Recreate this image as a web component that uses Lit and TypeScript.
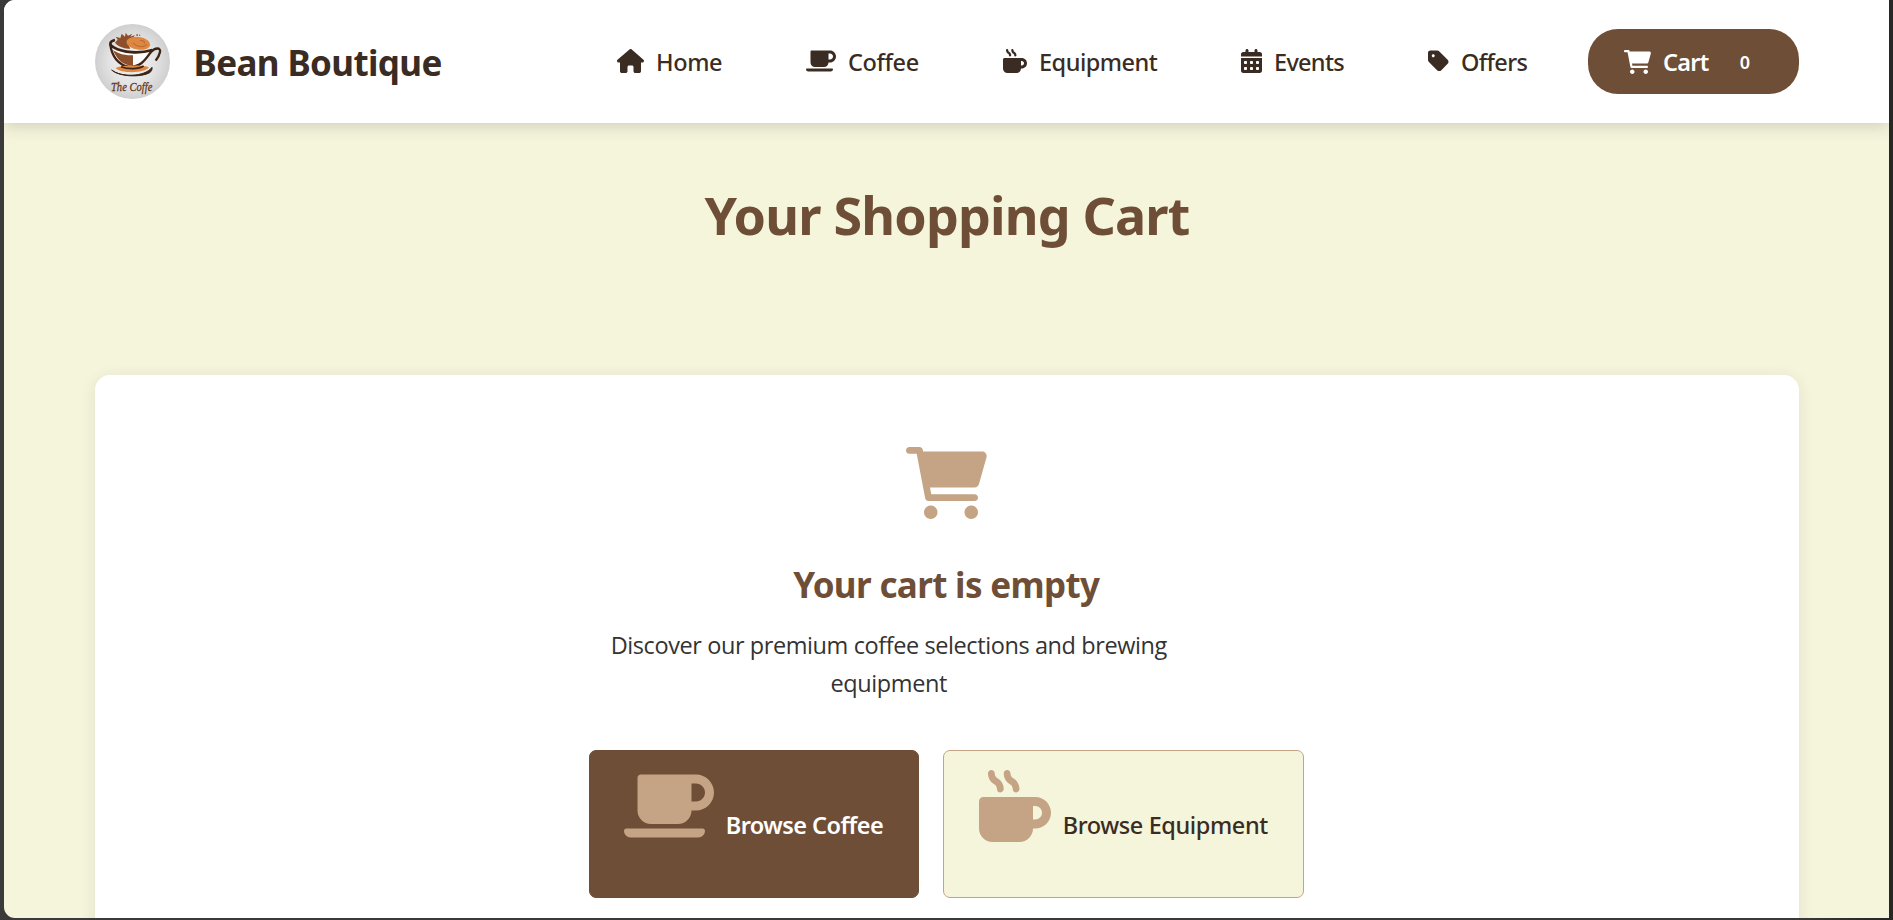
import { LitElement, html, css, svg } from "lit";
import { customElement, property } from "lit/decorators.js";

const ICONS: Record<string, { w: number; d: string }> = {
  home: { w: 576, d: "M575.8 255.5c0 18-15 32.1-32 32.1h-32l.7 160.2c0 2.7-.2 5.4-.5 8.1V472c0 22.1-17.9 40-40 40H456c-1.1 0-2.2 0-3.3-.1c-1.4 .1-2.8 .1-4.2 .1H416 392c-22.1 0-40-17.9-40-40V448 384c0-17.7-14.3-32-32-32H256c-17.7 0-32 14.3-32 32v64 24c0 22.1-17.9 40-40 40H160 128.1c-1.5 0-3-.1-4.5-.2c-1.2 .1-2.4 .2-3.6 .2H104c-22.1 0-40-17.9-40-40V360c0-.9 0-1.9 .1-2.8V287.6H32c-18 0-32-14-32-32.1c0-9 3-17 10-24L266.4 8c7-7 15-8 22-8s15 2 21 7L564.8 231.5c8 7 12 15 11 24z" },
  coffee: { w: 640, d: "M512 32H120c-13.25 0-24 10.75-24 24L96.01 288c0 53 43 96 96 96h192C437 384 480 341 480 288h32c70.63 0 128-57.38 128-128S582.6 32 512 32zM512 224h-32V96h32c35.25 0 64 28.75 64 64S547.3 224 512 224zM560 416h-544C7.164 416 0 423.2 0 432C0 458.5 21.49 480 48 480h480c26.51 0 48-21.49 48-48C576 423.2 568.8 416 560 416z" },
  mug: { w: 512, d: "M400 192H32C14.25 192 0 206.3 0 224v192c0 53 43 96 96 96h192c53 0 96-43 96-96h16c61.75 0 112-50.25 112-112S461.8 192 400 192zM400 352H384V256h16C426.5 256 448 277.5 448 304S426.5 352 400 352zM107.9 100.7C120.3 107.1 128 121.4 128 136c0 13.25 10.75 23.89 24 23.89S176 148.1 176 135.7c0-31.34-16.83-60.64-43.91-76.45C119.7 52.03 112 38.63 112 24.28c0-13.25-10.75-24.14-24-24.14S64 11.03 64 24.28C64 55.63 80.83 84.92 107.9 100.7zM219.9 100.7C232.3 107.1 240 121.4 240 136c0 13.25 10.75 23.86 24 23.86S288 148.1 288 135.7c0-31.34-16.83-60.64-43.91-76.45C231.7 52.03 224 38.63 224 24.28c0-13.25-10.75-24.18-24-24.18S176 11.03 176 24.28C176 55.63 192.8 84.92 219.9 100.7z" },
  calendar: { w: 448, d: "M160 32V64H288V32C288 14.33 302.3 0 320 0C337.7 0 352 14.33 352 32V64H400C426.5 64 448 85.49 448 112V160H0V112C0 85.49 21.49 64 48 64H96V32C96 14.33 110.3 0 128 0C145.7 0 160 14.33 160 32zM0 192H448V464C448 490.5 426.5 512 400 512H48C21.49 512 0 490.5 0 464V192zM64 304C64 312.8 71.16 320 80 320H112C120.8 320 128 312.8 128 304V272C128 263.2 120.8 256 112 256H80C71.16 256 64 263.2 64 272V304zM192 304C192 312.8 199.2 320 208 320H240C248.8 320 256 312.8 256 304V272C256 263.2 248.8 256 240 256H208C199.2 256 192 263.2 192 272V304zM336 256C327.2 256 320 263.2 320 272V304C320 312.8 327.2 320 336 320H368C376.8 320 384 312.8 384 304V272C384 263.2 376.8 256 368 256H336zM64 432C64 440.8 71.16 448 80 448H112C120.8 448 128 440.8 128 432V400C128 391.2 120.8 384 112 384H80C71.16 384 64 391.2 64 400V432zM208 384C199.2 384 192 391.2 192 400V432C192 440.8 199.2 448 208 448H240C248.8 448 256 440.8 256 432V400C256 391.2 248.8 384 240 384H208zM320 432C320 440.8 327.2 448 336 448H368C376.8 448 384 440.8 384 432V400C384 391.2 376.8 384 368 384H336C327.2 384 320 391.2 320 400V432z" },
  tag: { w: 448, d: "M48 32H197.5C214.5 32 230.7 38.74 242.7 50.75L418.7 226.7C443.7 251.7 443.7 292.3 418.7 317.3L285.3 450.7C260.3 475.7 219.7 475.7 194.7 450.7L18.75 274.7C6.743 262.7 0 246.5 0 229.5V80C0 53.49 21.49 32 48 32zM112 176C129.7 176 144 161.7 144 144C144 126.3 129.7 112 112 112C94.33 112 80 126.3 80 144C80 161.7 94.33 176 112 176z" },
  cart: { w: 576, d: "M96 0C107.5 0 117.4 8.19 119.6 19.51L121.1 32H541.8C562.1 32 578.3 52.25 572.6 72.66L518.6 264.7C514.7 278.5 502.1 288 487.8 288H170.7L179.9 336H488C501.3 336 512 346.7 512 360C512 373.3 501.3 384 488 384H159.1C148.5 384 138.6 375.8 136.4 364.5L76.14 48H24C10.75 48 0 37.25 0 24C0 10.75 10.75 0 24 0H96zM128 464C128 437.5 149.5 416 176 416C202.5 416 224 437.5 224 464C224 490.5 202.5 512 176 512C149.5 512 128 490.5 128 464zM512 464C512 490.5 490.5 512 464 512C437.5 512 416 490.5 416 464C416 437.5 437.5 416 464 416C490.5 416 512 437.5 512 464z" },
};

@customElement("app-icon")
class AppIcon extends LitElement {
  @property() name = "home";
  static styles = css`
    :host { display: block; flex: none; height: 24px; }
    svg { display: block; height: 100%; width: auto; fill: currentColor; }
  `;
  render() {
    const { w, d } = ICONS[this.name];
    return html`<svg viewBox="0 0 ${w} 512">${svg`<path d=${d} />`}</svg>`;
  }
}

@customElement("brand-logo")
class BrandLogo extends LitElement {
  static styles = css`
    :host { display: block; flex: none; width: 75px; height: 75px; }
    svg { display: block; width: 100%; height: 100%; }
    .name { font-family: "Liberation Serif", serif; font-style: italic; font-size: 40px; fill: #5f3417; stroke: #5f3417; stroke-width: 0.8px; }
  `;
  render() {
    return html`<svg viewBox="0 0 225 225">
      <defs>
        <radialGradient id="bg" cx="50%" cy="50%" r="50%">
          <stop offset="0" stop-color="#f2f2f2" />
          <stop offset="0.6" stop-color="#e4e4e4" />
          <stop offset="1" stop-color="#cfcfcf" />
        </radialGradient>
      </defs>
      <circle cx="112.5" cy="112.5" r="112.5" fill="url(#bg)" />
      <path d="M52 68C60 112 82 126 112 128C140 126 158 104 166 78C130 88 84 86 52 68Z" fill="#fdfdfd" />
      <path d="M54 78C74 92 94 94 114 94V126C84 124 66 108 54 78Z" fill="#8d4f2c" />
      <path d="M60 56L68 47L62 38L76 42L80 29L90 38L92 26L99 35L112 29L106 38L120 33L114 41C102 46 96 56 106 74C88 74 70 68 60 56Z" fill="#8d4f2c" />
      <path d="M124 31h5v4h-5zM132 32h4v3h-4z" fill="#8d4f2c" />
      <ellipse cx="130" cy="58" rx="36" ry="19" transform="rotate(8 130 58)" fill="#dd8743" />
      <path d="M114 56C124 70 150 72 156 60M136 50C144 48 150 52 148 58" fill="none" stroke="#b9632b" stroke-width="3" />
      <path d="M60 48C42 52 42 64 56 70C84 86 132 90 172 78" fill="none" stroke="#3d2314" stroke-width="8" />
      <path d="M46 62C50 96 70 124 104 129C140 129 152 104 168 84C180 70 198 70 195 84C193 94 188 102 182 110" fill="none" stroke="#3d2314" stroke-width="7" />
      <path d="M62 132C74 122 150 122 162 130C152 148 76 150 62 132Z" fill="#dd8743" />
      <path d="M78 128C98 136 130 136 146 126" fill="none" stroke="#3d2314" stroke-width="5" />
      <path d="M50 138C76 160 150 160 171 130C172 136 170 142 164 146C140 160 74 160 50 138Z" fill="#3d2314" stroke="#3d2314" stroke-width="3" />
      <text class="name" x="48" y="200" textLength="124" lengthAdjust="spacingAndGlyphs">The Coffe</text>
    </svg>`;
  }
}

const NAV = [
  { id: "home", icon: "home", label: "Home" },
  { id: "coffee", icon: "coffee", label: "Coffee" },
  { id: "equipment", icon: "mug", label: "Equipment" },
  { id: "events", icon: "calendar", label: "Events" },
  { id: "offers", icon: "tag", label: "Offers" },
];

@customElement("app-root")
class AppRoot extends LitElement {
  static styles = css`
    * { box-sizing: border-box; }
    :host {
      display: block;
      box-sizing: border-box;
      height: 920px;
      padding: 0 4px 2px;
      overflow: hidden;
      background: linear-gradient(to right, #3a3a3a 1800px, #272727 1880px);
      font-family: "Noto Sans", "Open Sans", sans-serif;
      color: #3a2c23;
      white-space: nowrap;
    }
    .page {
      height: 918px;
      overflow: hidden;
      display: flex;
      flex-direction: column;
      background: #f5f5dc;
      border-radius: 11px 0 0 11px;
    }
    header {
      flex: none;
      position: relative;
      display: flex;
      justify-content: space-between;
      align-items: center;
      height: 123px;
      padding: 0 90px 0 91px;
      background: #fff;
      box-shadow: 0 3px 15px rgba(58, 44, 35, 0.2);
    }
    .brand { display: flex; align-items: center; gap: 23.5px; }
    .brand-name { padding-top: 2px; font-size: 35px; font-weight: 700; line-height: 48px; letter-spacing: -0.62px; }
    nav { display: flex; align-items: center; gap: 36px; }
    .link {
      display: flex;
      align-items: center;
      gap: 12px;
      padding: 0 0 0 24px;
      font-size: 23.5px;
      font-weight: 500;
      line-height: 32px;
    }
    .link app-icon { margin-bottom: 2px; }
    .home { width: 153px; letter-spacing: -0.37px; }
    .coffee { width: 161px; letter-spacing: -0.36px; }
    .equipment { width: 202px; letter-spacing: -0.49px; }
    .events { width: 151px; letter-spacing: -0.7px; }
    .offers { width: 148px; letter-spacing: -0.62px; }
    .cart {
      display: flex;
      align-items: center;
      width: 211px;
      height: 65px;
      padding-left: 36px;
      border-radius: 30px;
      background: #6f4e37;
      color: #fff;
      font-size: 23.5px;
      font-weight: 600;
      letter-spacing: -0.7px;
      line-height: 32px;
    }
    .cart app-icon { margin-right: 12px; }
    .count { margin-left: 31px; font-size: 18px; letter-spacing: 0; }
    main { flex: 1; min-height: 0; padding: 60px 90px 0 91px; color: #6f4e37; }
    h1 {
      margin: 0 0 128px;
      text-align: center;
      font-size: 52px;
      font-weight: 700;
      line-height: 64px;
      letter-spacing: -0.82px;
    }
    .card {
      height: 640px;
      padding: 72px 1.5px 0 0;
      display: flex;
      flex-direction: column;
      align-items: center;
      background: #fff;
      border-radius: 15px;
      box-shadow: 0 3px 15px rgba(58, 44, 35, 0.1);
    }
    .big { height: 72px; color: #c4a484; }
    h2 { margin: 44px 0 19px; font-size: 35px; font-weight: 700; line-height: 44px; letter-spacing: -0.65px; }
    .empty { width: 715px; }
    p {
      margin: 0 0 47.5px;
      width: 600px;
      padding: 0 20px;
      white-space: normal;
      text-align: center;
      color: #333;
      font-family: "Open Sans", "Noto Sans", sans-serif;
      font-size: 23.5px;
      line-height: 38.4px;
      letter-spacing: -0.41px;
    }
    .actions { display: flex; gap: 24px; }
    .btn {
      display: flex;
      align-items: flex-start;
      gap: 12px;
      height: 148px;
      padding: 19px 0 0 34px;
      border: 1px solid #6f4e37;
      border-radius: 7px;
      font-size: 23.5px;
      font-weight: 600;
      line-height: 32px;
    }
    .btn span { margin-top: 39px; }
    .primary { width: 330px; background: #6f4e37; color: #fff; letter-spacing: -0.56px; }
    .secondary { width: 361px; padding-left: 35px; background: #f5f5dc; border-color: #c4a484; color: #3a2c23; letter-spacing: -0.4px; font-weight: 500; }
  `;
  render() {
    return html`
      <div class="page">
        <header>
          <div class="brand">
            <brand-logo></brand-logo>
            <span class="brand-name">Bean Boutique</span>
          </div>
          <nav>
            ${NAV.map((n) => html`<a class="link ${n.id}"><app-icon name=${n.icon}></app-icon><span>${n.label}</span></a>`)}
            <a class="cart"><app-icon name="cart"></app-icon><span>Cart</span><span class="count">0</span></a>
          </nav>
        </header>
        <main>
          <h1>Your Shopping Cart</h1>
          <section class="card">
            <app-icon class="big" name="cart"></app-icon>
            <h2>Your cart is empty</h2>
            <div class="empty">
              <p>Discover our premium coffee selections and brewing equipment</p>
              <div class="actions">
                <a class="btn primary"><app-icon class="big" name="coffee"></app-icon><span>Browse Coffee</span></a>
                <a class="btn secondary"><app-icon class="big" name="mug"></app-icon><span>Browse Equipment</span></a>
              </div>
            </div>
          </section>
        </main>
      </div>`;
  }
}
